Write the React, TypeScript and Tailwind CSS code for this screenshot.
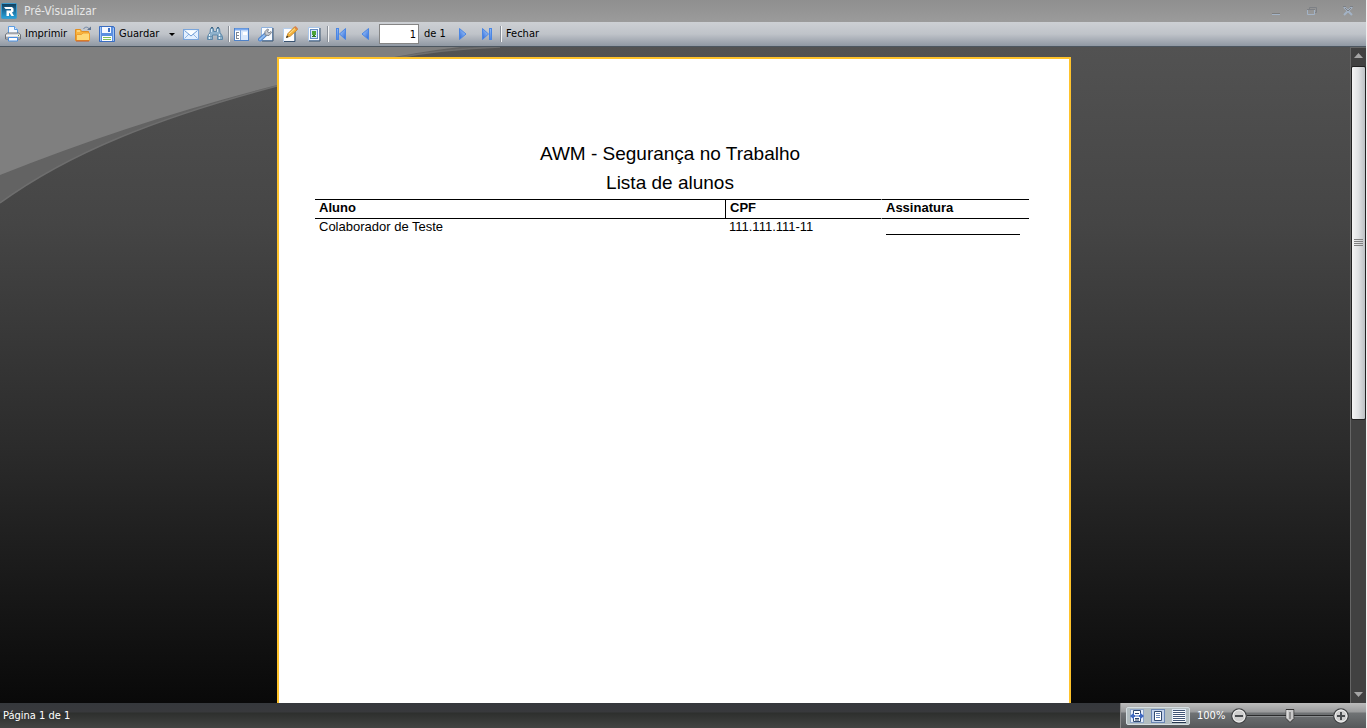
import React, { useState } from "react";

type IconProps = { children: React.ReactNode };

function Icon16({ children }: IconProps) {
  return (
    <svg width="16" height="16" viewBox="0 0 16 16" aria-hidden="true" className="shrink-0">
      {children}
    </svg>
  );
}

function PrinterIcon() {
  return (
    <Icon16>
      <path d="M3.500 8V.5h6l3 3V8z" fill="#f4f9ff" stroke="#5b9be0" />
      <path d="M9.500 .5v3h3" fill="#cfe4fb" stroke="#5b9be0" />
      <path d="M.5 13V8.500l2-1.500h11l2 1.500V13z" fill="#d9dbdf" stroke="#6d7077" />
      <path d="M1 9.500h14" stroke="#f7f7f7" />
      <path d="M1 11.500h14" stroke="#a2a5ab" />
      <path d="M3.500 11.500h9v3.500h-9z" fill="#fff" stroke="#4a90e2" />
      <path d="M13 9h1v1h-1z" fill="#5aa043" />
    </Icon16>
  );
}

function FolderIcon() {
  return (
    <Icon16>
      <path d="M.5 14.500v-11h5l1 2h7v9z" fill="#f9b43c" stroke="#e08f24" />
      <path d="M1.500 14.500V8.500h5l1.500-1.500h6.500v7.500z" fill="#ffd978" stroke="#f0a030" />
      <path d="M1 15h13" stroke="#c9561a" />
      <path d="M2 5h3" stroke="#fff0b8" />
      <path d="M8.500 3C10 .5 13 .5 14.500 3.500" fill="none" stroke="#6d83a1" />
      <path d="M12 4h4V.5z" fill="#5d7391" />
    </Icon16>
  );
}

function DiskIcon() {
  return (
    <Icon16>
      <path d="M.5 .5h14l1 1v14H.5z" fill="#5a8fe0" stroke="#3a6cc0" />
      <path d="M3 1h9v6H3z" fill="#f4f8ff" />
      <path d="M9 2h2v4H9z" fill="#3c6fc4" />
      <path d="M1.500 1v14M14.500 2v13" stroke="#9fc4f6" />
      <path d="M3 10h10v5H3z" fill="#fff" />
      <path d="M4 11.500h8M4 13.500h8" stroke="#7fc05a" />
    </Icon16>
  );
}

function MailIcon() {
  return (
    <Icon16>
      <rect x=".5" y="3.500" width="15" height="10" fill="#e3f0ff" stroke="#7aa5da" />
      <path d="M1.500 12.500l5-5M14.500 12.500l-5-5" stroke="#8fb5e2" />
      <path d="M1.500 4.500L8 10l6.500-5.500" fill="#fafdff" stroke="#6f9cd5" />
    </Icon16>
  );
}

function BinocularsIcon() {
  return (
    <Icon16>
      <path d="M3.500 2.500h3v3h3v-3h3l.5 4 2.500 4v3h-5V9h-5v4.500h-5v-3L3 6.500z" fill="#8fb2cc" stroke="#5e88a8" />
      <path d="M4.500 3v3M10.500 3v3" stroke="#d7e8f5" />
      <path d="M2.500 8v5M12.500 8v5" stroke="#e4f1fa" />
      <path d="M1 10.500h4.500M10.500 10.500H15" stroke="#6b93b1" />
      <path d="M4 1.500h2M10 1.500h2" stroke="#416685" />
    </Icon16>
  );
}

function OutlineIcon() {
  return (
    <Icon16>
      <rect x=".5" y="2.500" width="14" height="12" fill="#fff" stroke="#4f82c8" />
      <path d="M1 3.500h13" stroke="#7aaaf0" strokeWidth="2" />
      <path d="M6.500 4v10" stroke="#7ba4dc" />
      <path d="M7 5h7v9H7z" fill="#dbe9fc" />
      <path d="M9 6h4v3H9z" fill="#fff" />
      <path d="M2.500 6v7M3 6.500h2M3 9.500h2M3 12.500h2" stroke="#7e8793" />
    </Icon16>
  );
}

function WrenchIcon() {
  return (
    <Icon16>
      <path d="M3.500 1.500h11v13h-11z" fill="#f8fbff" stroke="#8fb2de" />
      <path d="M4 15h11V2" fill="none" stroke="#38526f" />
      <path d="M2 13.500L8 8" stroke="#4d82ca" strokeWidth="4" strokeLinecap="round" />
      <path d="M2 13.500L8 8" stroke="#91bdf1" strokeWidth="2" strokeLinecap="round" />
      <path d="M7 9V5.500L9.500 3l1 .5L9.500 6 11 7l2-1.500.5 1L11 9.500z" fill="#c9ccd2" stroke="#80858e" />
    </Icon16>
  );
}

function EditIcon() {
  return (
    <Icon16>
      <path d="M1.500 2.500h11v13h-11z" fill="#fcfdff" stroke="#b4cdec" />
      <path d="M2 15.500h11V5" fill="none" stroke="#38526f" />
      <path d="M4.500 11.500L6 7.500 12.500 1 15.500 3.500 8.500 10z" fill="#f4b33c" stroke="#c98a2c" />
      <path d="M7 8l6-5.500" stroke="#ffe49a" />
      <path d="M12 1.500L13.500 0 16 2.500l-1 1.500z" fill="#d9824c" />
      <path d="M4 12l1-2.500L6.500 11z" fill="#2a2a2a" />
    </Icon16>
  );
}

function PageSetupIcon() {
  return (
    <Icon16>
      <path d="M2.500 1.500h11v13h-11z" fill="#fff" stroke="#a9c6ea" />
      <path d="M3 15h11V2" fill="none" stroke="#38526f" />
      <rect x="4.500" y="3.500" width="7" height="9" fill="#d4e6fb" stroke="#648cc2" />
      <path d="M6 5h4v4H6z" fill="#4ba336" />
      <path d="M7 9h2v1h1v1H6v-1h1z" fill="#2e7a22" />
    </Icon16>
  );
}

function NavIcon({ kind }: { kind: "first" | "prev" | "next" | "last" }) {
  const flip = kind === "next" || kind === "last";
  const bar = kind === "first" || kind === "last";
  return (
    <Icon16>
      <defs>
        <linearGradient id={"nav-" + kind} x1="0" y1="0" x2="1" y2="1">
          <stop offset="0" stopColor="#b4d6ff" />
          <stop offset="1" stopColor="#2a67d8" />
        </linearGradient>
      </defs>
      <g transform={flip ? "matrix(-1 0 0 1 16 0)" : undefined} fill={"url(#nav-" + kind + ")"} stroke="#4a86e4">
        {bar && <rect x="3.500" y="2.500" width="2" height="11" />}
        <path d={bar ? "M12.500 2.500v11L6.500 8z" : "M11.500 2.500v11L5 8z"} />
      </g>
    </Icon16>
  );
}

function Separator() {
  return <span className="ml-px h-4 w-0.5 shrink-0 border-l border-[#8a9099] bg-[#f4f5f6]" />;
}

function ToolButton({ label, children }: { label: string; children: React.ReactNode }) {
  return (
    <button type="button" aria-label={label} className="flex h-6 w-6 shrink-0 items-center justify-center">
      {children}
    </button>
  );
}

function TitleBar() {
  return (
    <header className="flex h-[22px] shrink-0 items-center bg-linear-to-b from-[#8f8f8f] to-[#9b9b9b] pr-1.5 pl-px">
      <svg width="16" height="16" viewBox="0 0 16 16" aria-hidden="true">
        <defs>
          <linearGradient id="logo" x1="0" y1="0" x2="0" y2="1">
            <stop offset="0" stopColor="#123c58" />
            <stop offset=".5" stopColor="#1b6f9f" />
            <stop offset="1" stopColor="#2aa5dd" />
          </linearGradient>
        </defs>
        <rect x=".5" y=".5" width="15" height="15" rx="1" fill="url(#logo)" stroke="#3c9acb" />
        <path d="M3 4h8l1.500 1.500v3L11 9.500l2 3.500h-2.500L8.500 10H8v3H5.500V7.500H10V6H4.500z" fill="#fff" />
      </svg>
      <h1 className="ml-[7px] text-[12px] leading-4 text-[#e6e6e6]">Pré-Visualizar</h1>
      <div className="ml-auto flex items-center gap-3">
        <button type="button" aria-label="Minimizar" className="flex h-5 w-6 items-center justify-center">
          <svg width="12" height="12" viewBox="0 0 12 12">
            <path d="M2 8.500h8" stroke="#7d7d7d" />
            <path d="M2 9.500h8" stroke="#a3b3c6" />
          </svg>
        </button>
        <button type="button" aria-label="Restaurar" className="flex h-5 w-6 items-center justify-center">
          <svg width="12" height="12" viewBox="0 0 12 12">
            <path d="M3.500 4V2.500h7v5H9" fill="none" stroke="#7d8085" />
            <path d="M1.500 4.500h7v5h-7z" fill="none" stroke="#a3b3c6" />
            <path d="M1 4.500h8" stroke="#7d8085" />
          </svg>
        </button>
        <button type="button" aria-label="Fechar janela" className="flex h-5 w-6 items-center justify-center">
          <svg width="12" height="12" viewBox="0 0 12 12">
            <path d="M2 2l8 8M10 2l-8 8" stroke="#a3b3c6" strokeWidth="2" />
            <path d="M1 1.500h3M8 1.500h3M3 3l3 3 3-3" fill="none" stroke="#7d8085" />
          </svg>
        </button>
      </div>
    </header>
  );
}

function Toolbar() {
  const [page, setPage] = useState("1");
  return (
    <nav
      aria-label="Ferramentas"
      className="flex h-[25px] shrink-0 items-center border-b border-[#4c5660] bg-linear-to-b from-[#cdd0d4] via-[#bfc3c9] to-[#9098a3] pl-[5px] text-[11px] leading-4 text-black"
    >
      <button type="button" className="flex w-[66px] shrink-0 items-center gap-1">
        <PrinterIcon />
        Imprimir
      </button>
      <ToolButton label="Abrir">
        <FolderIcon />
      </ToolButton>
      <button type="button" className="ml-1 flex w-[66px] shrink-0 items-center gap-1">
        <DiskIcon />
        Guardar
      </button>
      <button type="button" aria-label="Opções de guardar" className="flex h-6 w-3.5 shrink-0 items-center justify-center">
        <svg width="6" height="3" viewBox="0 0 6 3">
          <path d="M0 0h6L3 3z" fill="#000" />
        </svg>
      </button>
      <ToolButton label="Enviar por e-mail">
        <MailIcon />
      </ToolButton>
      <ToolButton label="Procurar">
        <BinocularsIcon />
      </ToolButton>
      <Separator />
      <ToolButton label="Estrutura">
        <OutlineIcon />
      </ToolButton>
      <ToolButton label="Configurações">
        <WrenchIcon />
      </ToolButton>
      <ToolButton label="Editar página">
        <EditIcon />
      </ToolButton>
      <ToolButton label="Marca de água">
        <PageSetupIcon />
      </ToolButton>
      <Separator />
      <ToolButton label="Primeira página">
        <NavIcon kind="first" />
      </ToolButton>
      <ToolButton label="Página anterior">
        <NavIcon kind="prev" />
      </ToolButton>
      <label className="ml-0.5 flex w-[72px] shrink-0 items-center gap-[5px]">
        <input
          aria-label="Página"
          value={page}
          onChange={(e) => setPage(e.target.value)}
          className="h-5 w-10 border border-[#858585] bg-white pr-0.5 text-right outline-none"
        />
        de 1
      </label>
      <ToolButton label="Página seguinte">
        <NavIcon kind="next" />
      </ToolButton>
      <ToolButton label="Última página">
        <NavIcon kind="last" />
      </ToolButton>
      <Separator />
      <button type="button" className="ml-1 shrink-0">
        Fechar
      </button>
    </nav>
  );
}

function Swoosh() {
  return (
    <svg width="560" height="160" viewBox="0 0 560 160" aria-hidden="true" className="absolute top-0 left-0">
      <path d="M0 156C70 105 160 70 277 39C350 20 410 3 500 0H0z" fill="#636363" />
      <path d="M0 156C70 105 160 70 277 39C350 20 410 3 500 0" fill="none" stroke="#6e6e6e" strokeWidth="1.500" />
      <path d="M0 128Q135 74 277 38Q380 9 460 0H0z" fill="#7f7f7f" />
    </svg>
  );
}

function ReportPage() {
  return (
    <article className="relative flex w-[794px] shrink-0 flex-col border-2 border-b-0 border-[#ffc32b] bg-white pt-20 pr-10 pl-9 text-black">
      <h2 className="pr-1 text-center text-[19px] leading-[29px]">AWM - Segurança no Trabalho</h2>
      <h2 className="pr-1 text-center text-[19px] leading-[29px]">Lista de alunos</h2>
      <table className="mt-0.5 w-full table-fixed border-separate border-spacing-0 text-left text-[13px] leading-4">
        <colgroup>
          <col />
          <col className="w-[156px]" />
          <col className="w-[148px]" />
        </colgroup>
        <thead>
          <tr>
            <th className="border-y border-black px-1 pb-0.5 font-bold">Aluno</th>
            <th className="border-y border-l border-black px-1 pb-0.5 font-bold">CPF</th>
            <th className="border-y border-l border-y-black border-l-white px-1 pb-0.5 font-bold">Assinatura</th>
          </tr>
        </thead>
        <tbody>
          <tr>
            <td className="px-1">Colaborador de Teste</td>
            <td className="px-1">111.111.111-11</td>
            <td className="pr-1 pl-[5px]">
              <div className="h-[15px] w-[134px] border-b border-black" />
            </td>
          </tr>
        </tbody>
      </table>
    </article>
  );
}

function ScrollBar() {
  return (
    <div className="flex w-4 shrink-0 flex-col border-t border-l border-[#666] bg-[#414141]">
      <button type="button" aria-label="Rolar para cima" className="flex h-[18px] shrink-0 items-center justify-center pb-1">
        <svg width="9" height="5" viewBox="0 0 9 5">
          <path d="M4.500 0L9 5H0z" fill="#a5a5a5" />
        </svg>
      </button>
      <div className="min-h-0 flex-1">
        <div className="flex h-[57%] flex-col items-center justify-center gap-px rounded-xs border border-[#222] bg-linear-to-r from-[#f5f5f5] via-[#dfe1e3] to-[#bdc1c4]">
          <span className="h-px w-[9px] bg-[#808080]" />
          <span className="h-px w-[9px] bg-[#808080]" />
          <span className="h-px w-[9px] bg-[#808080]" />
          <span className="h-px w-[9px] bg-[#808080]" />
        </div>
      </div>
      <button type="button" aria-label="Rolar para baixo" className="flex h-4 shrink-0 items-center justify-center pb-0.5">
        <svg width="9" height="5" viewBox="0 0 9 5">
          <path d="M0 0h9L4.500 5z" fill="#a5a5a5" />
        </svg>
      </button>
    </div>
  );
}

function ZoomButton({ label, plus }: { label: string; plus?: boolean }) {
  return (
    <button type="button" aria-label={label} className="shrink-0">
      <svg width="16" height="16" viewBox="0 0 16 16">
        <circle cx="8" cy="8" r="7.200" fill="#cfcfcf" stroke="#424446" strokeWidth="1.300" />
        <circle cx="8" cy="8" r="6" fill="none" stroke="#f2f2f2" />
        <path d={plus ? "M4 8h8M8 4v8" : "M4 8h8"} stroke="#4a4d50" strokeWidth="2" />
      </svg>
    </button>
  );
}

function StatusBar() {
  const [zoom, setZoom] = useState(50);
  return (
    <footer className="flex h-[25px] shrink-0 items-stretch justify-between bg-[linear-gradient(to_bottom,#35383c_0px,#38393c_9px,#2d2f2d_10px,#434443_25px)] text-[11px] leading-4 text-white">
      <p className="flex items-center pl-[3px]">Página 1 de 1</p>
      <div className="flex w-[246px] items-center border-l border-[#8b8b8b] bg-[linear-gradient(to_bottom,#bcbcbc_0px,#9a9b9c_9px,#707375_10px,#55585a_25px)] pl-[5px]">
        <div className="flex h-[18px] w-16 items-center justify-around rounded-xs border border-[#d5dde0] bg-[#b2bdc0]">
          <button type="button" aria-label="Largura da página">
            <svg width="14" height="14" viewBox="0 0 14 14" className="block">
              <rect x=".5" y=".5" width="13" height="13" fill="#e6eefa" stroke="#8ba3c8" />
              <path d="M3.500 1.500h7v11h-7z" fill="#fff" stroke="#30496f" />
              <path d="M0 7l4-3.500V6h6V3.500L14 7l-4 3.500V8H4v2.500z" fill="#3f69c0" />
              <path d="M5 4.500h4M5 9.500h4M5 11h4" stroke="#28406b" />
              <path d="M5 7h4" stroke="#fff" />
            </svg>
          </button>
          <button type="button" aria-label="Página inteira">
            <svg width="14" height="14" viewBox="0 0 14 14" className="block">
              <rect x=".5" y=".5" width="13" height="13" fill="#c3d2ea" stroke="#6a86b4" />
              <path d="M3.500 2.500h7v9h-7z" fill="#fff" stroke="#30496f" />
              <path d="M5 4.500h4M5 6.500h4M5 8.500h4" stroke="#6885b4" />
            </svg>
          </button>
          <button type="button" aria-label="Várias páginas">
            <svg width="14" height="14" viewBox="0 0 14 14" className="block">
              <rect x=".5" y=".5" width="13" height="13" fill="#fff" stroke="#dfe8f4" />
              <path d="M1 1.500h12M1 3.500h12M1 5.500h12M1 7.500h12M1 9.500h12M1 11.500h12" stroke="#405575" />
              <path d="M0 13.500h14" stroke="#25364e" />
            </svg>
          </button>
        </div>
        <span className="w-[41px] pl-[7px]">100%</span>
        <ZoomButton label="Reduzir" />
        <div className="relative flex h-4 w-[86px] items-center">
          <div className="h-0.5 w-full border-b border-[#8b8e90] bg-[#2a2b2c]" />
          <svg
            width="9"
            height="14"
            viewBox="0 0 9 14"
            aria-hidden="true"
            className="absolute top-px -translate-x-1/2"
            style={{ left: zoom + "%" }}
          >
            <path d="M.5 .5h8v9l-4 4-4-4z" fill="#c9c9c9" stroke="#333" />
            <path d="M4.500 3v7" stroke="#555" />
            <path d="M1.500 1v8" stroke="#eee" />
          </svg>
          <input
            type="range"
            aria-label="Zoom"
            min={0}
            max={100}
            value={zoom}
            onChange={(e) => setZoom(Number(e.target.value))}
            className="absolute inset-0 w-full opacity-0"
          />
        </div>
        <ZoomButton label="Ampliar" plus />
      </div>
    </footer>
  );
}

export default function App() {
  return (
    <div className="flex h-screen flex-col overflow-hidden border-r border-[#f0f0f0] bg-black font-['DejaVu_Sans_Condensed','DejaVu_Sans',sans-serif]">
      <TitleBar />
      <Toolbar />
      <div className="flex min-h-0 flex-1">
        <main className="relative flex min-w-0 flex-1 justify-center overflow-hidden bg-[linear-gradient(to_bottom,#525252_0%,#454545_27%,#2b2b2b_61%,#090909_100%)] pt-2.5 pr-0.5 font-['Liberation_Sans',Arial,sans-serif]">
          <Swoosh />
          <ReportPage />
        </main>
        <ScrollBar />
      </div>
      <StatusBar />
    </div>
  );
}
